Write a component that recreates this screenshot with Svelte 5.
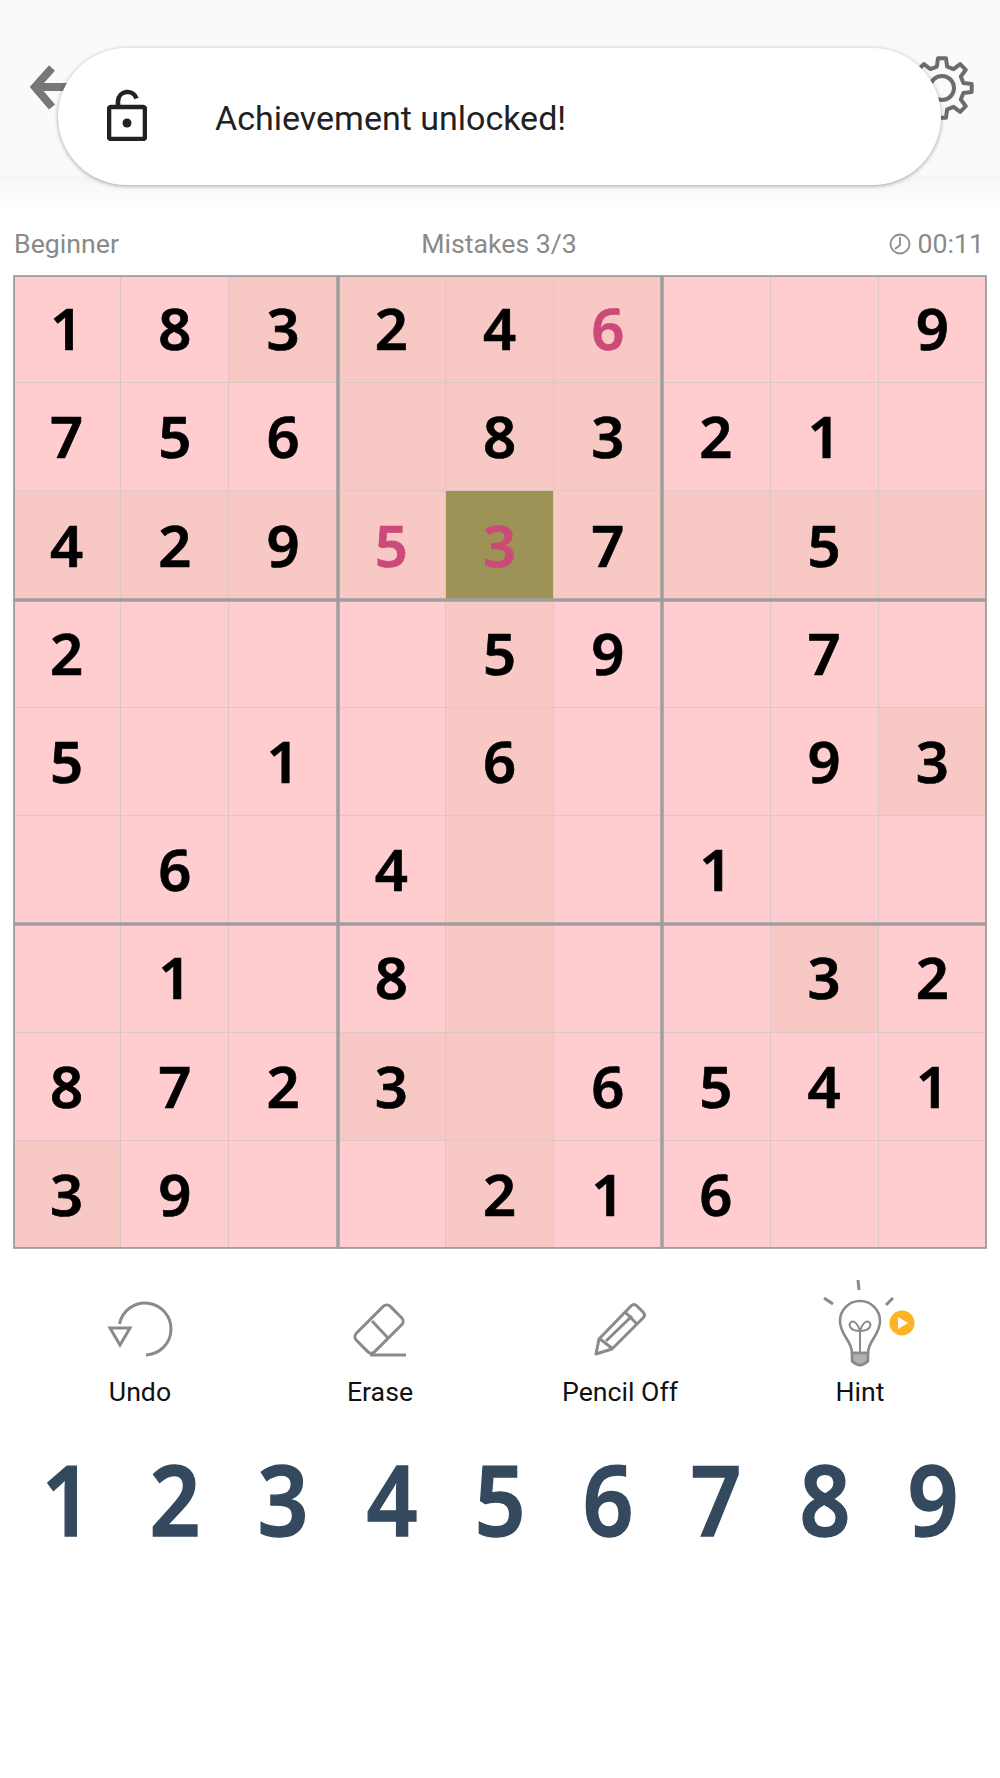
<script lang="ts">
  // * marks highlight, ! marks a wrong entry, s the selected cell
  const rows = [
    ['1', '8', '3*', '2*', '4*', '6*!', '', '', '9'],
    ['7', '5', '6', '*', '8*', '3*', '2', '1', ''],
    ['4*', '2*', '9*', '5*!', '3s', '7*', '*', '5*', '*'],
    ['2', '', '', '', '5*', '9', '', '7', ''],
    ['5', '', '1', '', '6*', '', '', '9', '3*'],
    ['', '6', '', '4', '*', '', '1', '', ''],
    ['', '1', '', '8', '*', '', '', '3*', '2'],
    ['8', '7', '2', '3*', '*', '6', '5', '4', '1'],
    ['3*', '9', '', '', '2*', '1', '6', '', '']
  ];

  const cells = rows.flat().map((raw) => ({
    value: raw.replace(/[^0-9]/g, ''),
    hl: raw.includes('*'),
    wrong: raw.includes('!') || raw.includes('s'),
    selected: raw.includes('s')
  }));

  function gearPath(cx: number, cy: number, outer: number, inner: number, teeth: number) {
    const step = (Math.PI * 2) / teeth;
    const pts: string[] = [];
    for (let i = 0; i < teeth; i++) {
      const a = i * step - Math.PI / 2;
      const at = (r: number, o: number) =>
        `${(cx + r * Math.cos(a + o * step)).toFixed(1)} ${(cy + r * Math.sin(a + o * step)).toFixed(1)}`;
      pts.push(`${i ? 'L' : 'M'}${at(inner, -0.3)}`, `L${at(outer, -0.17)}`, `L${at(outer, 0.17)}`, `L${at(inner, 0.3)}`);
    }
    return pts.join(' ') + ' Z';
  }
</script>

<div class="page">
  <header class="topbar">
    <svg class="back" viewBox="0 0 40 48" width="40" height="48" fill="none" stroke="#777" stroke-width="8">
      <path d="M24 4 L7 23 L24 43" />
      <path d="M8 23 H40" />
    </svg>
    <svg class="gear" viewBox="0 0 66 66" width="66" height="66" fill="none" stroke="#6c6c6c" stroke-width="4" stroke-linejoin="round">
      <path d={gearPath(33, 33, 30, 22, 8)} />
      <circle cx="33" cy="33" r="12" />
    </svg>
  </header>

  <div class="toast">
    <svg class="lock" viewBox="0 0 40 52" width="40" height="52" fill="none" stroke="#222" stroke-width="4.6">
      <rect x="2" y="18" width="36" height="32" rx="2" />
      <path d="M11 18 V12 A9.5 9.5 0 0 1 29.5 9.5" />
      <circle cx="20" cy="34" r="4.5" fill="#222" stroke="none" />
    </svg>
    <span class="toast-text">Achievement unlocked!</span>
  </div>

  <div class="info">
    <span>Beginner</span>
    <span>Mistakes 3/3</span>
    <span class="time">
      <svg viewBox="0 0 22 22" width="22" height="22" fill="none" stroke="#8c8c8c" stroke-width="1.8">
        <circle cx="11" cy="11" r="9.5" />
        <path d="M11 4 V12 L6 16" />
      </svg>
      00:11
    </span>
  </div>

  <div class="board">
    {#each cells as c}
      <div class="cell" class:hl={c.hl} class:wrong={c.wrong} class:selected={c.selected}>
        <span>{c.value}</span>
      </div>
    {/each}
    <div class="boxes">
      {#each Array(9) as _}
        <div class="box"></div>
      {/each}
    </div>
  </div>

  <div class="tools">
    <div class="tool">
      <svg viewBox="-10 0 120 100" width="120" height="100" fill="none" stroke="#8a8a8a" stroke-width="3">
        <path d="M56 80 A26 26 0 1 0 29.5 49" />
        <path d="M20 53 H40 L30 70 Z" />
      </svg>
      <span>Undo</span>
    </div>
    <div class="tool">
      <svg viewBox="-10 0 120 100" width="120" height="100" fill="none" stroke="#8a8a8a" stroke-width="3">
        <rect x="-24" y="-13" width="48" height="26" rx="5" transform="translate(49 54) rotate(-45)" />
        <path d="M40 80 H76" />
        <path d="M42 46 L58 63" />
      </svg>
      <span>Erase</span>
    </div>
    <div class="tool">
      <svg viewBox="-10 0 120 100" width="120" height="100" fill="none" stroke="#8a8a8a" stroke-width="3" stroke-linejoin="round">
        <path d="M26 79 L29 64 L61 31 Q64 28 67 31 L73 37 Q76 40 73 43 L42 74 Z" />
        <path d="M30 64 L43 74" />
        <path d="M55 37 L67 49" />
        <path d="M36 66 L62 41" />
      </svg>
      <span>Pencil Off</span>
    </div>
    <div class="tool">
      <svg viewBox="-10 0 120 100" width="120" height="100" fill="none" stroke="#8a8a8a" stroke-width="2.6">
        <path d="M48 5 L49 15 M14 23 L23 29 M76 30 L83 23" stroke-width="3" />
        <path d="M42 78 C42 66 30 60 30 46 A20 20 0 1 1 70 46 C70 60 58 66 58 78 Z" />
        <path d="M50 78 V56 M50 56 C40 56 38 50 41 47 C44 45 48 49 50 56 C52 49 56 45 59 47 C62 50 60 56 50 56" stroke-width="2" />
        <path d="M42 78 H58 V86 Q50 94 42 86 Z" fill="#b0b0b0" />
        <circle cx="92" cy="48" r="12.5" fill="#fdb324" stroke="none" />
        <path d="M88 42 L98 48 L88 54 Z" fill="#fff" stroke="none" />
      </svg>
      <span>Hint</span>
    </div>
  </div>

  <div class="numbers">
    {#each [1, 2, 3, 4, 5, 6, 7, 8, 9] as n}
      <span>{n}</span>
    {/each}
  </div>
</div>

<style>
  :global(body) {
    margin: 0;
    background: #fff;
  }

  .page {
    position: relative;
    min-height: 1778px;
    font-family: Roboto, sans-serif;
  }

  .topbar {
    position: relative;
    height: 176px;
    display: flex;
    justify-content: space-between;
    align-items: flex-start;
    padding: 0 25px 0 28px;
    background: #f9fafc;
  }

  .topbar::after {
    content: '';
    position: absolute;
    left: 0;
    right: 0;
    top: 176px;
    height: 30px;
    background: linear-gradient(#f5f5f5, #fff);
  }

  .back {
    margin-top: 64px;
  }

  .gear {
    margin-top: 55px;
  }

  .toast {
    position: absolute;
    top: 48px;
    left: 58px;
    width: 883px;
    height: 137px;
    z-index: 2;
    display: flex;
    align-items: center;
    gap: 68px;
    padding-left: 49px;
    box-sizing: border-box;
    background: #fff;
    border-radius: 69px;
    box-shadow: 0 1px 4px rgba(0, 0, 0, 0.35);
    font-size: 34px;
    color: #212121;
  }

  .toast-text {
    margin-top: 2px;
  }

  .lock {
    margin-top: -4px;
  }

  .info {
    position: relative;
    display: grid;
    grid-template-columns: 1fr auto 1fr;
    padding: 53px 16px 0 14px;
    font-size: 26.7px;
    line-height: 30px;
    color: #8a8a8a;
  }

  .time {
    display: flex;
    justify-content: flex-end;
    align-items: center;
    gap: 7px;
  }

  .board {
    position: relative;
    display: grid;
    grid-template-columns: repeat(9, 1fr);
    grid-template-rows: repeat(9, 1fr);
    width: 974px;
    height: 974px;
    margin: 16px 0 0 13px;
    background: #ffcdd0;
  }

  .cell {
    display: flex;
    align-items: center;
    justify-content: center;
    box-sizing: border-box;
    border-right: 1px solid #dfc6c6;
    border-bottom: 1px solid #dfc6c6;
    font-family: 'Noto Sans', sans-serif;
    font-weight: 600;
    font-size: 58px;
    -webkit-text-stroke: 0.7px currentColor;
    color: #000;
  }

  .cell span {
    margin-top: -2px;
  }

  .cell.hl {
    background: #f8c8c4;
  }

  .cell.wrong {
    color: #cc4a78;
  }

  .cell.selected {
    background: #9e9357;
  }

  .boxes {
    position: absolute;
    inset: 1.5px;
    display: grid;
    grid-template-columns: repeat(3, 1fr);
    grid-template-rows: repeat(3, 1fr);
  }

  .box {
    box-shadow: 0 0 0 1.75px #9e9e9e;
  }

  .tools {
    display: grid;
    grid-template-columns: repeat(4, 1fr);
    padding: 26px 20px 0;
  }

  .tool {
    display: flex;
    flex-direction: column;
    align-items: center;
    font-size: 26.7px;
    line-height: 30px;
    color: #111;
  }

  .tool span {
    margin-top: 2px;
  }

  .numbers {
    display: grid;
    grid-template-columns: repeat(9, 1fr);
    width: 974px;
    margin: 23px 0 0 13px;
    font-family: 'Noto Sans', sans-serif;
    font-weight: 600;
    font-size: 97px;
    line-height: 136px;
    -webkit-text-stroke: 1.4px currentColor;
    text-align: center;
    color: #34495e;
  }

  .numbers span {
    transform: scaleX(0.92);
  }
</style>
